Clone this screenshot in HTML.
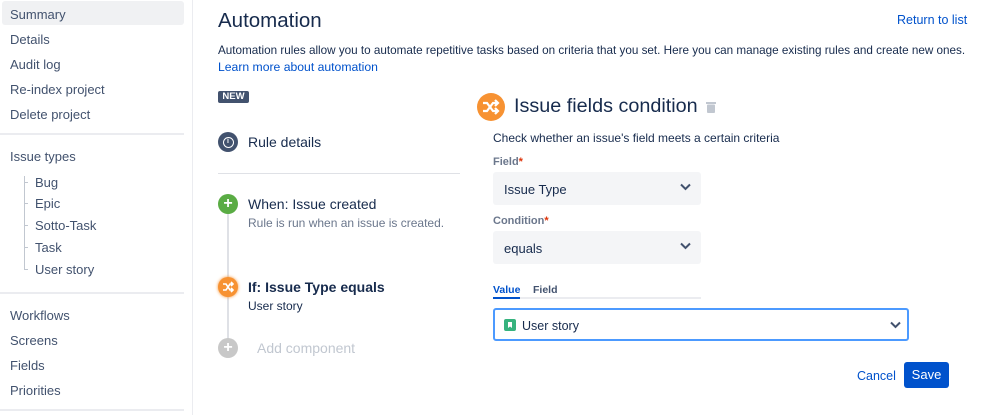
<!DOCTYPE html>
<html><head><style>
*{box-sizing:border-box;margin:0;padding:0}
body{width:998px;height:415px;overflow:hidden;background:#fff;font-family:"Liberation Sans",Arial,sans-serif;color:#172b4d;position:relative}
.a{position:absolute;white-space:nowrap}
.nav{font-size:13px;color:#42526e;left:10px}
.sub{font-size:13px;color:#42526e;left:35px}
.div{position:absolute;left:0;width:184px;height:2px;background:#ebecf0}
.circ{position:absolute;border-radius:50%;display:flex;align-items:center;justify-content:center;color:#fff}
.sel{position:absolute;left:493px;width:208px;height:33px;background:#f4f5f7;border-radius:3px;font-size:13px;padding:10px 0 0 11px}
.chev{position:absolute;right:10px;top:11px}
.lbl{font-size:11px;font-weight:bold;color:#6b778c;left:493px}
</style></head><body>
<div class="a" style="left:192px;top:0;width:1px;height:415px;background:#ebecf0"></div>
<div class="a" style="left:2px;top:1px;width:182px;height:24px;background:#f0f1f3;border-radius:3px"></div>
<div class="a nav" style="top:7px">Summary</div>
<div class="a nav" style="top:32px">Details</div>
<div class="a nav" style="top:57px">Audit log</div>
<div class="a nav" style="top:82px">Re-index project</div>
<div class="a nav" style="top:107px">Delete project</div>
<div class="div" style="top:133px"></div>
<div class="a nav" style="top:149px">Issue types</div>
<div class="a" style="left:24px;top:176px;width:1px;height:94px;background:#c1c7d0"></div>
<div class="a" style="left:24px;top:182px;width:4px;height:1px;background:#c1c7d0"></div>
<div class="a" style="left:24px;top:203px;width:4px;height:1px;background:#c1c7d0"></div>
<div class="a" style="left:24px;top:225px;width:4px;height:1px;background:#c1c7d0"></div>
<div class="a" style="left:24px;top:247px;width:4px;height:1px;background:#c1c7d0"></div>
<div class="a" style="left:24px;top:269px;width:4px;height:1px;background:#c1c7d0"></div>
<div class="a sub" style="top:175px">Bug</div>
<div class="a sub" style="top:196px">Epic</div>
<div class="a sub" style="top:218px">Sotto-Task</div>
<div class="a sub" style="top:240px">Task</div>
<div class="a sub" style="top:262px">User story</div>
<div class="div" style="top:292px"></div>
<div class="a nav" style="top:308px">Workflows</div>
<div class="a nav" style="top:333px">Screens</div>
<div class="a nav" style="top:358px">Fields</div>
<div class="a nav" style="top:383px">Priorities</div>
<div class="div" style="top:409px"></div>

<div class="a" style="left:218px;top:9px;font-size:20.5px;color:#172b4d">Automation</div>
<div class="a" style="left:897px;top:13px;font-size:12.5px;color:#0052cc">Return to list</div>
<div class="a" style="left:218px;top:44px;font-size:11.7px">Automation rules allow you to automate repetitive tasks based on criteria that you set. Here you can manage existing rules and create new ones.</div>
<div class="a" style="left:218px;top:60px;font-size:12.2px;color:#0052cc">Learn more about automation</div>
<div class="a" style="left:218px;top:91px;width:31px;height:12px;background:#42526e;border-radius:2px;color:#fff;font-size:9.5px;font-weight:bold;text-align:center;line-height:12px">NEW</div>

<div class="circ" style="left:218px;top:132px;width:20px;height:20px;background:#42526e"><div style="width:11px;height:11px;border:1.5px solid #fff;border-radius:50%;font-size:7px;font-weight:bold;line-height:8px;text-align:center">i</div></div>
<div class="a" style="left:248px;top:134px;font-size:14px">Rule details</div>
<div class="a" style="left:218px;top:173px;width:242px;height:1px;background:#dfe1e6"></div>
<div class="a" style="left:227px;top:212px;width:2px;height:136px;background:#dfe1e6"></div>
<div class="circ" style="left:218px;top:194px;width:20px;height:20px;background:#5aac44;font-size:16px;font-weight:bold;line-height:20px">+</div>
<div class="a" style="left:248px;top:196px;font-size:14px">When: Issue created</div>
<div class="a" style="left:248px;top:216px;font-size:12px;color:#6b778c">Rule is run when an issue is created.</div>
<div class="circ" style="left:218px;top:277px;width:20px;height:20px;background:#f79232;box-shadow:0 0 3px #f79232"><svg width="12" height="12" viewBox="0 0 12 12" fill="none" stroke="#fff" stroke-width="1.6"><path d="M1 3h3l4 6h3M1 9h3l4-6h3M9 1l2 2-2 2M9 7l2 2-2 2"/></svg></div>
<div class="a" style="left:248px;top:279px;font-size:14px;font-weight:bold">If: Issue Type equals</div>
<div class="a" style="left:248px;top:299px;font-size:12px">User story</div>
<div class="circ" style="left:218px;top:338px;width:20px;height:20px;background:#c8c8c8;font-size:16px;font-weight:bold">+</div>
<div class="a" style="left:257px;top:340px;font-size:14px;color:#c1c7d0">Add component</div>

<div class="circ" style="left:477px;top:93px;width:28px;height:28px;background:#f79232"><svg width="18" height="16" viewBox="0 0 18 16" fill="none" stroke="#fff" stroke-width="2.2"><path d="M1 4h4l6 8h5M1 12h4l6-8h5M13 1l3 3-3 3M13 9l3 3-3 3"/></svg></div>
<div class="a" style="left:514px;top:95px;font-size:19.8px">Issue fields condition</div>
<svg class="a" style="left:706px;top:101px" width="10" height="12" viewBox="0 0 10 12"><rect x="0" y="1" width="10" height="2" fill="#c1c7d0"/><rect x="1" y="3.5" width="8" height="8.5" rx="1" fill="#c1c7d0"/></svg>
<div class="a" style="left:493px;top:131px;font-size:12px">Check whether an issue's field meets a certain criteria</div>
<div class="a lbl" style="top:156px">Field<span style="color:#de350b">*</span></div>
<div class="sel" style="top:172px">Issue Type<svg class="chev" width="11" height="8" viewBox="0 0 11 8"><path d="M1 1.5l4.5 4.5 4.5-4.5" fill="none" stroke="#42526e" stroke-width="2"/></svg></div>
<div class="a lbl" style="top:215px">Condition<span style="color:#de350b">*</span></div>
<div class="sel" style="top:231px">equals<svg class="chev" width="11" height="8" viewBox="0 0 11 8"><path d="M1 1.5l4.5 4.5 4.5-4.5" fill="none" stroke="#42526e" stroke-width="2"/></svg></div>
<div class="a" style="left:493px;top:284px;font-size:10.5px;font-weight:bold;color:#0052cc">Value</div>
<div class="a" style="left:533px;top:284px;font-size:10.5px;font-weight:bold;color:#42526e">Field</div>
<div class="a" style="left:493px;top:297px;width:208px;height:2px;background:#ebecf0"></div>
<div class="a" style="left:493px;top:297px;width:27px;height:2px;background:#0052cc"></div>
<div class="a" style="left:493px;top:308px;width:416px;height:33px;border:2px solid #4c9aff;border-radius:3px;font-size:12.5px;padding:9px 0 0 27px">User story
<div class="a" style="left:9px;top:9px;width:12px;height:12px;background:#36b37e;border-radius:2px"><svg width="12" height="12" viewBox="0 0 12 12"><path d="M4 3h4v6l-2-1.5L4 9z" fill="#fff"/></svg></div>
<svg class="a" style="right:6px;top:11px" width="11" height="8" viewBox="0 0 11 8"><path d="M1 1.5l4.5 4.5 4.5-4.5" fill="none" stroke="#42526e" stroke-width="2"/></svg></div>
<div class="a" style="left:857px;top:369px;font-size:12.5px;color:#0052cc">Cancel</div>
<div class="a" style="left:904px;top:362px;width:45px;height:26px;background:#0052cc;border-radius:3px;color:#fff;font-size:13px;text-align:center;line-height:26px">Save</div>
</body></html>
